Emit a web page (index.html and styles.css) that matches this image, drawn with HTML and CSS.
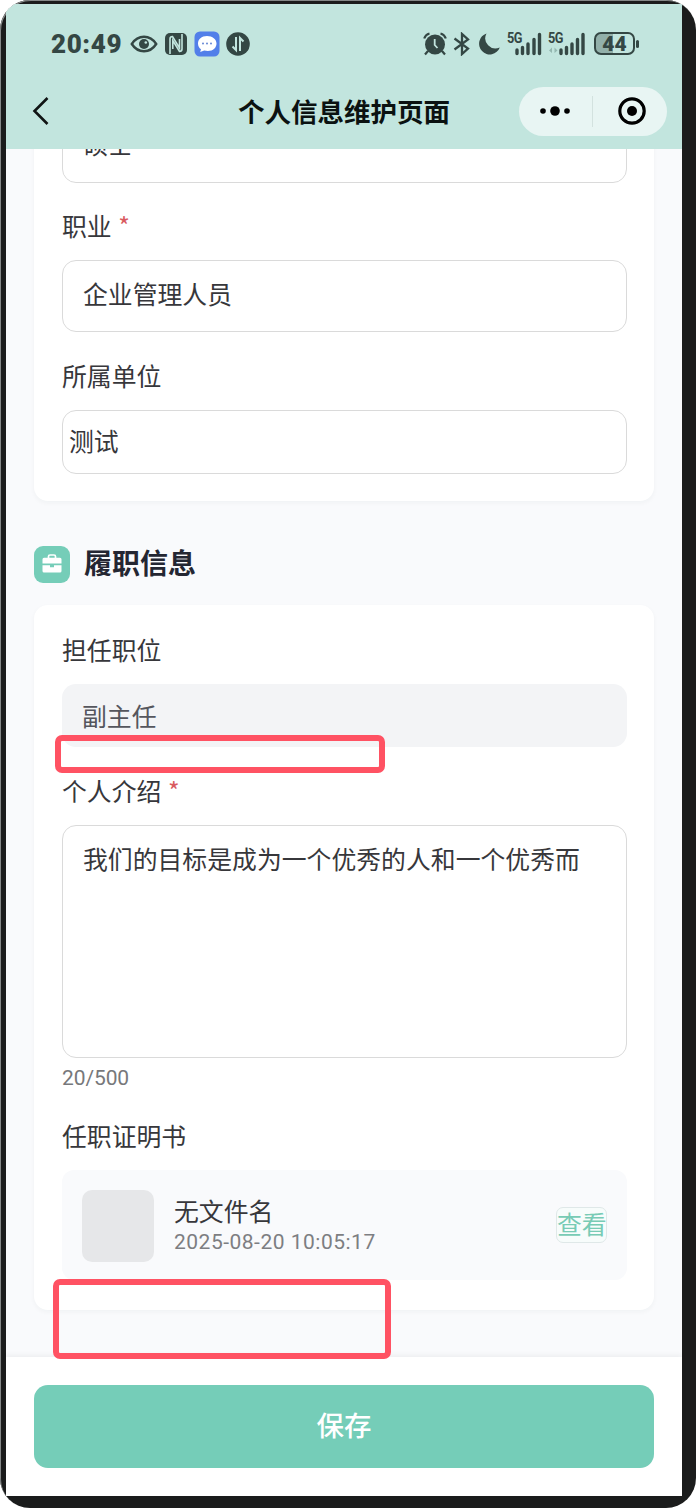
FILE: index.html
```
<!DOCTYPE html>
<html lang="zh-CN">
<head>
<meta charset="utf-8">
<title>个人信息维护页面</title>
<link rel="stylesheet" href="styles.css">
</head>
<body>
<div class="phone">
  <div class="screen">
    <header class="header">
      <div class="status">
        <span class="clock">20:49</span>
        <svg class="eye" width="28" height="24" viewBox="0 0 28 24" fill="none" stroke="#344744"><path d="M1.8 12C8 2.400 20 2.400 26.200 12C20 21.600 8 21.600 1.800 12Z" stroke-width="2.400"/><circle cx="14" cy="12" r="5" fill="#344744" stroke="none"/><circle cx="15.800" cy="10.500" r="1.300" fill="#c2e5de" stroke="none"/></svg>
        <svg class="nfc" width="24" height="24" viewBox="0 0 24 24"><rect x="1" y="1" width="22" height="22" rx="5" fill="#344744"/><path d="M6 22V7Q6 4.500 8.500 4.500L15.500 16V7M18 2V17Q18 19.500 15.500 19.500L8.800 8.500V17" fill="none" stroke="#c2e5de" stroke-width="1.600"/></svg>
        <svg class="chat" width="26" height="26" viewBox="0 0 26 26"><rect x=".5" y=".5" width="25" height="25" rx="5.500" fill="#527fe9"/><path d="M13 5C7.500 5 4 8.300 4 12.500c0 2.500 1 4.500 3 5.800L6.200 21l4-1.400c8 1.700 12.300-2.300 12.300-7.100C22.500 8.300 18.500 5 13 5Z" fill="#fff"/><g fill="#6687d5"><circle cx="9" cy="12.500" r="1"/><circle cx="13" cy="12.500" r="1"/><circle cx="17" cy="12.500" r="1"/></g></svg>
        <svg class="data" width="24" height="24" viewBox="0 0 24 24"><circle cx="12" cy="12" r="11.800" fill="#344744"/><path d="M10 5V18L6.500 14.500M14 19V6L17.500 9.500" fill="none" stroke="#c2e5de" stroke-width="2"/></svg>
        <span class="spacer"></span>
        <svg class="alarm" width="24" height="24" viewBox="0 0 24 24" fill="none" stroke="#344744" stroke-width="2.200"><circle cx="12" cy="12.500" r="10" fill="#344744" stroke="none"/><path d="M1.200 6.500Q2.500 2.500 6.500 1.500M17.500 1.500Q21.500 2.500 22.800 6.500M5 19l-3 3.500M19 19l3 3.500"/><path d="M11.700 7V13L14.500 16" stroke="#c2e5de" stroke-width="1.800"/></svg>
        <svg class="bt" width="18" height="24" viewBox="0 0 18 24" fill="none" stroke="#344744" stroke-width="2.300"><path d="M1.500 6.500L15 16.500L9 22V2L15 7.500L1.500 17.500"/></svg>
        <svg class="moon" width="22" height="24" viewBox="0 0 22 24"><path d="M8.500 1.500A10.700 10.700 0 1 0 21.800 15.500A10.200 10.200 0 0 1 8.500 1.500Z" fill="#344744"/></svg>
        <span class="signal"><b>5G</b><svg width="35" height="24" viewBox="0 0 35 24" stroke="#344744" stroke-width="3.400" stroke-linecap="round"><path d="M10 18v3.500M15.500 15.500v6M21 12v9.500M27 7.500v14M32.500 2.500v19"/></svg></span>
        <span class="signal signal-two"><b>5G</b><svg width="38" height="24" viewBox="0 0 38 24" stroke="#344744" stroke-width="3.400" stroke-linecap="round"><path d="M13 18v3.500M18.500 15.500v6M24 12v9.500M29.500 7.500v14M35 2.500v19"/><path d="M4 15.500v5.500L1 18.500zM6.500 15.500v5.500l3-2.500z" fill="#94b7b0" stroke="none"/></svg></span>
        <span class="battery">44</span>
      </div>
      <div class="nav">
        <svg class="back" width="18" height="30" viewBox="0 0 18 30"><path d="M15.500 2L2.500 15L15.500 28" fill="none" stroke="#101414" stroke-width="2.600"/></svg>
        <h1>个人信息维护页面</h1>
        <div class="capsule">
          <svg width="32" height="12" viewBox="0 0 32 12"><circle cx="4" cy="6" r="2.800"/><circle cx="16" cy="6" r="4.800"/><circle cx="28" cy="6" r="2.800"/></svg>
          <i></i>
          <svg width="30" height="30" viewBox="0 0 30 30"><circle cx="15" cy="15" r="12.200" fill="none" stroke="#000" stroke-width="3.200"/><circle cx="15" cy="15" r="5"/></svg>
        </div>
      </div>
    </header>
    <main class="content">
      <section class="card card-basic">
        <div class="input input-scrolled">硕士</div>
        <div class="label">职业 <em>*</em></div>
        <div class="input">企业管理人员</div>
        <div class="label">所属单位</div>
        <div class="input input-text">测试</div>
      </section>
      <div class="section-title">
        <span class="section-icon"><svg width="20" height="20" viewBox="0 0 20 20"><path d="M6.500 4V2.500Q6.500 1 8 1h4q1.500 0 1.500 1.500V4" fill="none" stroke="#fff" stroke-width="1.700"/><path d="M2 3.800h16q1.500 0 1.500 1.500v4.200h-19V5.300Q.5 3.800 2 3.800ZM.5 11.300H8v2h4v-2h7.500V17q0 1.500-1.500 1.500H2Q.5 18.500.5 17Z" fill="#fff"/></svg></span>
        <h2>履职信息</h2>
      </div>
      <section class="card card-duty">
        <div class="label">担任职位</div>
        <div class="input input-disabled">副主任</div>
        <div class="label label-intro">个人介绍 <em>*</em></div>
        <div class="textarea">我们的目标是成为一个优秀的人和一个优秀而</div>
        <div class="count">20/500</div>
        <div class="label label-cert">任职证明书</div>
        <div class="file">
          <div class="thumb"></div>
          <div class="file-info">
            <div class="file-name">无文件名</div>
            <div class="file-date">2025-08-20 10:05:17</div>
          </div>
          <div class="view">查看</div>
        </div>
      </section>
    </main>
    <footer class="footer"><div class="save">保存</div></footer>
  </div>
  <div class="mark mark-one"></div>
  <div class="mark mark-two"></div>
</div>
</body>
</html>
```
FILE: styles.css
```
* { box-sizing: border-box; }
body {
  margin: 0;
  background: #fff;
  font-family: "Noto Sans CJK SC", sans-serif;
  font-size: 24.85px;
  color: #37373b;
}
svg { display: block; flex: none; }
.phone {
  position: relative;
  width: 696px;
  height: 1508px;
  padding: 4px 14px 12px 6px;
  background: #1b1c1c;
  border-radius: 30px;
  overflow: hidden;
  box-shadow: inset 1px 1px 0 #858888;
}
.screen {
  height: 1492px;
  display: flex;
  flex-direction: column;
  background: #fff;
}
.header { height: 145px; flex: none; background: #c2e5de; }
.status {
  height: 79px;
  padding: 0 47px 0 45px;
  display: flex;
  align-items: center;
  color: #344744;
}
.clock {
  width: 73px;
  font: 900 26px/30px Roboto, sans-serif;
  letter-spacing: .6px;
  white-space: nowrap;
}
.eye { margin-left: 6px; }
.nfc { margin-left: 6px; }
.chat { margin-left: 6px; }
.data { margin-left: 6px; }
.spacer { flex: 1; }
.bt { margin-left: 6px; }
.moon { margin-left: 7px; }
.signal { position: relative; margin-left: 7px; }
.signal b {
  position: absolute;
  left: 0;
  top: 0;
  font: 700 15px/12px Roboto, sans-serif;
  letter-spacing: -.8px;
  transform: scaleX(.85);
  transform-origin: left;
}
.signal-two { margin-left: 6px; }
.battery {
  position: relative;
  width: 41px;
  height: 23px;
  margin-left: 8px;
  border: 2px solid #344744;
  border-radius: 7px;
  background: linear-gradient(90deg, #92b0aa 46%, #c2e5de 46%);
  font: 900 21px/20px Roboto, sans-serif;
  text-align: center;
}
.battery::after {
  content: "";
  position: absolute;
  right: -6px;
  top: 6px;
  width: 3px;
  height: 8px;
  border-radius: 2px;
  background: #344744;
}
.nav { height: 56px; display: flex; align-items: center; padding: 0 15px 0 26px; }
.back { width: 18px; }
h1 {
  flex: 1;
  margin: -1px 0 0 188px;
  font-size: 26.500px;
  line-height: 40px;
  font-weight: 700;
  color: #0b1211;
  white-space: nowrap;
}
.capsule {
  width: 148px;
  height: 49px;
  flex: none;
  display: flex;
  align-items: center;
  border-radius: 25px;
  background: #e8f5f3;
  padding-left: 20px;
}
.capsule i { width: 1px; height: 31px; margin: 0 24px 0 21px; background: #d3e2df; }
.content { height: 1208px; flex: none; overflow: hidden; padding: 0 28px; background: #f9fafc; }
.card {
  padding: 0 27px 0 28px;
  border-radius: 14px;
  background: #fff;
  box-shadow: 0 2px 5px rgba(30, 40, 60, .04);
}
.card-basic { height: 390px; margin-top: -38px; }
.input {
  height: 72px;
  padding-left: 20px;
  border: 1px solid #dadada;
  border-radius: 14px;
  line-height: 65px;
  white-space: nowrap;
}
.input-scrolled { line-height: 62px; }
.label { height: 36px; margin: 26px 0 15px; line-height: 33px; white-space: nowrap; }
.label em { font-style: normal; color: #d95a5f; margin-left: 1px; }
.input-text { height: 64px; padding-left: 6px; line-height: 59px; }
.card-basic .input:nth-child(3) { margin-bottom: 27px; }
.section-title { display: flex; align-items: center; height: 38px; margin: 44px 0 22px; }
.section-icon {
  width: 36px;
  height: 37px;
  display: flex;
  align-items: center;
  justify-content: center;
  border-radius: 9px;
  background: #75cdb8;
}
h2 { margin: -5px 0 0 14px; font-size: 28px; line-height: 38px; font-weight: 700; color: #242632; }
.card-duty { height: 705px; padding-top: 28px; }
.card-duty .label { margin-top: 0; }
.input-disabled {
  height: 63px;
  border: 0;
  background: #f3f4f6;
  line-height: 63px;
  color: #55565d;
}
.card-duty .label-intro { margin: 27px 0 15px; }
.textarea {
  height: 233px;
  padding: 14px 20px;
  border: 1px solid #dadada;
  border-radius: 14px;
  line-height: 36px;
  white-space: nowrap;
}
.count { height: 40px; font: 21px/40px Roboto, sans-serif; color: #77787b; letter-spacing: -.1px; }
.card-duty .label-cert { margin: 21px 0 15px; }
.file {
  height: 110px;
  display: flex;
  align-items: center;
  padding: 0 20px;
  border-radius: 12px;
  background: #f9fafc;
}
.thumb { width: 72px; height: 72px; margin-top: 2px; border-radius: 10px; background: #e6e7e9; }
.file-info { flex: 1; margin-left: 20px; }
.file-name { line-height: 32px; margin-bottom: 2px; }
.file-date {
  font: 21px/28px Roboto, sans-serif;
  color: #7d7e82;
  letter-spacing: .5px;
  white-space: nowrap;
}
.view {
  width: 51px;
  height: 36px;
  border: 1px solid #dfe8e8;
  border-radius: 7px;
  background: #f7fcfb;
  color: #78cbb5;
  line-height: 31px;
  white-space: nowrap;
}
.footer {
  height: 139px;
  flex: none;
  position: relative;
  padding: 28px;
  background: #fff;
  box-shadow: 0 -2px 5px rgba(0, 0, 0, .05);
}
.save {
  height: 83px;
  border-radius: 14px;
  background: #75cdb8;
  color: #fff;
  font-size: 27.500px;
  font-weight: 500;
  line-height: 78px;
  text-align: center;
}
.mark { position: absolute; border: 6px solid #ff5263; border-radius: 7px; }
.mark-one { left: 55px; top: 735px; width: 330px; height: 38px; }
.mark-two { left: 53px; top: 1279px; width: 338px; height: 80px; }
```
